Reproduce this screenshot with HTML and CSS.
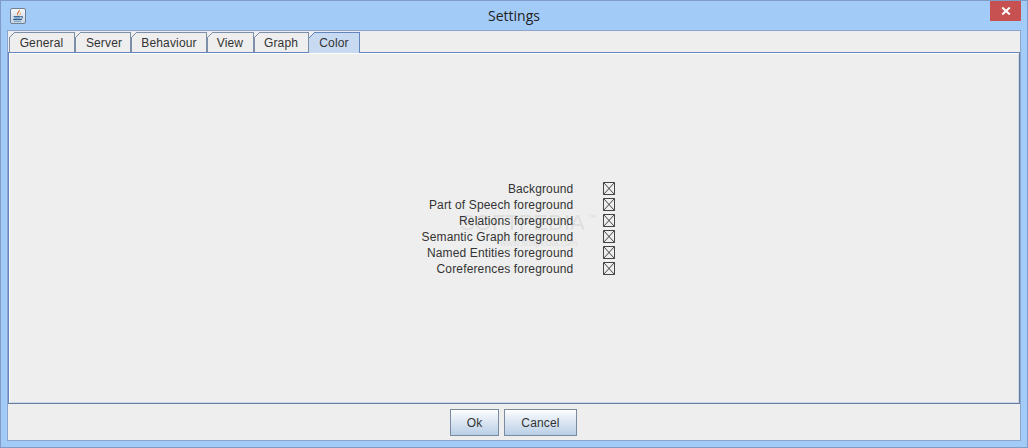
FILE: index.html
```html
<!DOCTYPE html>
<html lang="en">
<head>
<meta charset="utf-8">
<title>Settings</title>
<link rel="stylesheet" href="styles.css">
</head>
<body>
<div class="window">
  <header class="titlebar">
    <svg class="app-icon" width="16" height="16" viewBox="0 0 16 16" aria-hidden="true">
      <defs>
        <linearGradient id="tile" x1="0" y1="0" x2="0" y2="1">
          <stop offset="0" stop-color="#f6f8fb"/>
          <stop offset="1" stop-color="#c4d3e2"/>
        </linearGradient>
      </defs>
      <rect x="0.5" y="0.5" width="15" height="15" rx="1.5" fill="url(#tile)" stroke="#6f8094"/>
      <path d="M9.500 1.800C10.800 3.800 6.800 5 8 8C5.800 6.500 7.800 4 9.500 1.800Z" fill="#dd5f14"/>
      <path d="M11.300 4.500C11.500 6 9.500 6.300 10 8C8.700 6.800 9.900 5.200 11.300 4.500Z" fill="#f0933c"/>
      <path d="M3.500 8.500H10.500" stroke="#3f6f9e"/>
      <path d="M4 10H10" stroke="#3f6f9e"/>
      <path d="M10.500 8.500H12.500V10H10.500" fill="none" stroke="#3f6f9e" stroke-width="0.9"/>
      <path d="M3 11.500H12" stroke="#2f6497"/>
      <path d="M4 13.200H11" stroke="#6f99bd"/>
    </svg>
    <h1 class="title">Settings</h1>
    <button class="close" aria-label="Close">
      <svg width="10" height="8" viewBox="0 0 10 8" aria-hidden="true">
        <path d="M1.2 0.500L8.800 7.500M8.800 0.500L1.200 7.500" stroke="#fff" stroke-width="2"/>
      </svg>
    </button>
  </header>
  <div class="client">
    <nav class="tabs">
      <div class="tab tab-general">General</div>
      <div class="tab tab-server">Server</div>
      <div class="tab tab-behaviour">Behaviour</div>
      <div class="tab tab-view">View</div>
      <div class="tab tab-graph">Graph</div>
      <div class="tab tab-color active">Color</div>
    </nav>
    <main class="pane">
      <div class="watermark">SOFTPEDIA<span class="tm">™</span></div>
      <div class="watermark-url">www.softpedia.com</div>
      <div class="form">
        <div class="label">Background</div>
        <svg class="swatch" viewBox="0 0 13 13" aria-hidden="true"><path d="M.5.5h11v12H.5zM.5.5l11 12M11.500.5L.5 12.500"/></svg>
        <div class="label">Part of Speech foreground</div>
        <svg class="swatch" viewBox="0 0 13 13" aria-hidden="true"><path d="M.5.5h11v12H.5zM.5.5l11 12M11.500.5L.5 12.500"/></svg>
        <div class="label">Relations foreground</div>
        <svg class="swatch" viewBox="0 0 13 13" aria-hidden="true"><path d="M.5.5h11v12H.5zM.5.5l11 12M11.500.5L.5 12.500"/></svg>
        <div class="label">Semantic Graph foreground</div>
        <svg class="swatch" viewBox="0 0 13 13" aria-hidden="true"><path d="M.5.5h11v12H.5zM.5.5l11 12M11.500.5L.5 12.500"/></svg>
        <div class="label">Named Entities foreground</div>
        <svg class="swatch" viewBox="0 0 13 13" aria-hidden="true"><path d="M.5.5h11v12H.5zM.5.5l11 12M11.500.5L.5 12.500"/></svg>
        <div class="label">Coreferences foreground</div>
        <svg class="swatch" viewBox="0 0 13 13" aria-hidden="true"><path d="M.5.5h11v12H.5zM.5.5l11 12M11.500.5L.5 12.500"/></svg>
      </div>
    </main>
    <footer class="actions">
      <button class="btn btn-ok">Ok</button>
      <button class="btn btn-cancel">Cancel</button>
    </footer>
  </div>
</div>
</body>
</html>
```

FILE: styles.css
```css
* { box-sizing: border-box; }
html, body { margin: 0; padding: 0; }
body {
  width: 1028px;
  height: 448px;
  overflow: hidden;
  font-family: "Liberation Sans", Arial, sans-serif;
  font-size: 12px;
  letter-spacing: 0.15px;
  color: #333;
}
.window {
  width: 1028px;
  height: 448px;
  display: flex;
  flex-direction: column;
  background: #a3cbf7;
  border: 1px solid #7e9cc6;
  padding: 0 6px 6px 6px;
}
.titlebar {
  height: 29px;
  flex: none;
  display: flex;
  align-items: flex-start;
  position: relative;
}
.app-icon { margin: 7px 0 0 3px; }
.title {
  position: absolute;
  left: 0;
  right: 0;
  top: 5px;
  margin: 0;
  text-align: center;
  font-family: "Open Sans", sans-serif;
  font-weight: 400;
  font-size: 14px;
  letter-spacing: 0;
  line-height: 20px;
  color: #222;
}
.close {
  position: absolute;
  right: 0;
  top: 0;
  width: 31px;
  height: 20px;
  padding: 0;
  border: 0;
  background: #c75050;
  display: flex;
  align-items: center;
  justify-content: center;
}
.client {
  flex: 1;
  display: flex;
  flex-direction: column;
  background: #eee;
  border: 1px solid #8ba5cb;
}
.tabs {
  flex: none;
  height: 21px;
  padding: 1px 0 0 1px;
  display: flex;
  align-items: flex-end;
  position: relative;
  z-index: 1;
}
.tab {
  position: relative;
  height: 20px;
  border: 1px solid #7c8ea8;
  border-bottom: 0;
  border-left: 0;
  text-align: center;
  line-height: 21px;
  background: #eee;
}
.tab::before {
  content: "";
  position: absolute;
  left: 0;
  top: -1px;
  width: 6px;
  height: 6px;
  background: linear-gradient(to bottom right, #eee 0 42%, #7c8ea8 42% 58%, transparent 58%);
}
.tab::after {
  content: "";
  position: absolute;
  left: 0;
  top: 5px;
  bottom: 0;
  width: 1px;
  background: #7c8ea8;
}
.tab-general { width: 66px; }
.tab-server { width: 56px; padding-left: 3px; }
.tab-behaviour { width: 76px; padding-left: 1px; }
.tab-view { width: 47px; }
.tab-graph { width: 55px; }
.tab-color { width: 51px; }
.tab.active {
  background: #c8daf2;
  border-color: #6385bd;
  height: 21px;
  margin-bottom: -1px;
}
.tab.active::before {
  background: linear-gradient(to bottom right, #eee 0 42%, #6385bd 42% 58%, transparent 58%);
}
.tab.active::after { background: #c8daf2; bottom: 1px; }
.pane {
  flex: none;
  height: 352px;
  position: relative;
  display: flex;
  align-items: center;
  justify-content: center;
  padding: 2px 0 0 10px;
  background: #eee;
  border-top: 1px solid #6385bd;
  border-left: 1px solid #6385bd;
  border-right: 1px solid #6a7c98;
  border-bottom: 1px solid #6a7c98;
  box-shadow: inset 1px 1px 0 #fff, inset 1px 0 0 #c8daf2, inset -1px -1px 0 #c8daf2;
}
.form {
  display: grid;
  grid-template-columns: max-content 13px;
  column-gap: 30px;
  grid-auto-rows: 16px;
  align-items: center;
  position: relative;
  z-index: 1;
}
.label { text-align: right; line-height: 16px; }
.swatch {
  width: 13px;
  height: 13px;
  margin-bottom: 2px;
  display: block;
  fill: none;
  stroke: #444;
  stroke-width: 1;
}
.watermark {
  position: absolute;
  left: 451px;
  top: 152px;
  font-size: 22px;
  line-height: 26px;
  letter-spacing: 0;
  color: #dedede;
  white-space: nowrap;
}
.tm { font-size: 8px; vertical-align: 10px; margin-left: 3px; }
.watermark-url {
  position: absolute;
  left: 491px;
  top: 184px;
  font-size: 9px;
  line-height: 12px;
  letter-spacing: 0;
  color: #dedede;
  white-space: nowrap;
}
.actions {
  flex: 1;
  display: flex;
  justify-content: center;
  align-items: flex-start;
  gap: 5px;
  padding: 5px 1px 0 0;
}
.btn {
  height: 27px;
  padding: 0;
  border: 1px solid #7a8a9f;
  background: linear-gradient(#fff 0%, #eef3f9 20%, #b9cfe6 100%);
  font: inherit;
  letter-spacing: inherit;
  color: #333;
}
.btn-ok { width: 49px; }
.btn-cancel { width: 73px; }
```
